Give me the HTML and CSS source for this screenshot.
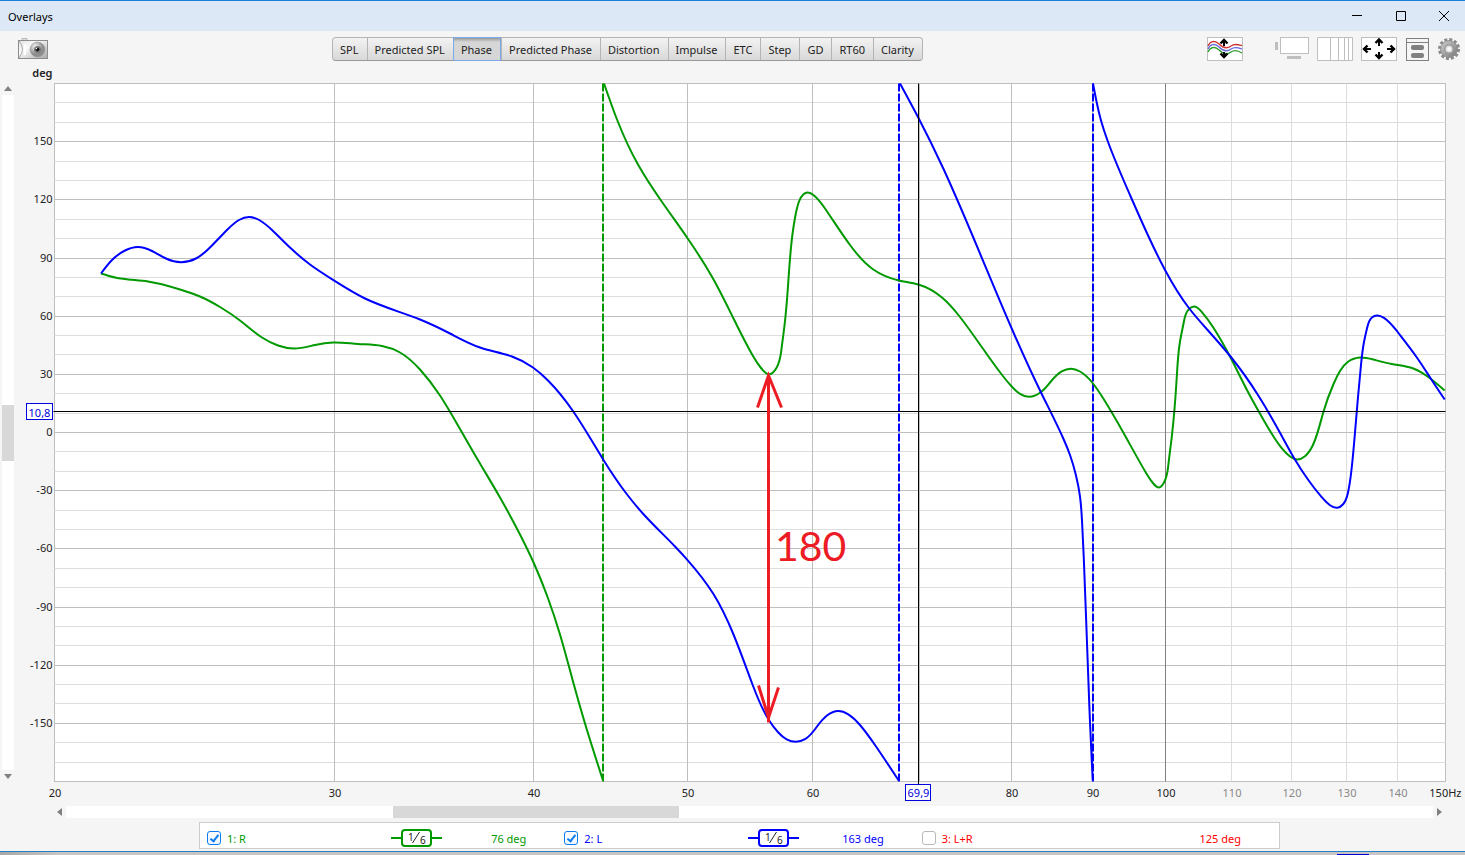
FILE: index.html
```html
<!DOCTYPE html>
<html lang="en">
<head>
  <meta charset="utf-8">
  <title>Overlays</title>
  <link rel="stylesheet" href="styles.css">
</head>
<body>
  <div class="window">
    <header class="titlebar">
      <span class="title">Overlays</span>
      <button class="win-btn" aria-label="Minimize"><svg width="10" height="10"><path d="M0 4.5H10"/></svg></button>
      <button class="win-btn" aria-label="Maximize"><svg width="10" height="10"><path d="M.5 .5H9.5V9.5H.5Z"/></svg></button>
      <button class="win-btn" aria-label="Close"><svg width="10" height="10"><path d="M0 0L10 10M10 0L0 10"/></svg></button>
    </header>

    <div class="toolbar">
      <button class="icon-btn" aria-label="Capture">
        <svg width="30" height="22" viewBox="0 0 30 22">
          <defs>
            <linearGradient id="body" x1="0" x2="1" y2="1"><stop offset="0" stop-color="#e2e2e2"/><stop offset=".35" stop-color="#fafafa"/><stop offset="1" stop-color="#a8a8a8"/></linearGradient>
            <radialGradient id="lens" cx=".35" cy=".3"><stop offset="0" stop-color="#f4f4f4"/><stop offset="1" stop-color="#8d8d8d"/></radialGradient>
          </defs>
          <path d="M4 2V.5H9V2" fill="#ddd" stroke="#bbb"/>
          <rect x=".5" y="2.5" width="29" height="18" fill="url(#body)" stroke="#8c8c8c"/>
          <path d="M1 3Q8 11 1 20" fill="none" stroke="#aaa"/>
          <path d="M7 6V17" stroke="#fff" stroke-width="2"/>
          <circle cx="19.500" cy="11.500" r="7.500" fill="url(#lens)" stroke="#999" stroke-width=".6"/>
          <circle cx="19.500" cy="11.500" r="3.500" fill="#777"/>
          <circle cx="19.500" cy="11.500" r="1.800" fill="#111"/>
          <circle cx="18.500" cy="10.500" r=".7" fill="#fff"/>
        </svg>
      </button>

      <nav class="tabs">
        <button>SPL</button>
        <button>Predicted SPL</button>
        <button class="active">Phase</button>
        <button>Predicted Phase</button>
        <button>Distortion</button>
        <button>Impulse</button>
        <button>ETC</button>
        <button>Step</button>
        <button>GD</button>
        <button>RT60</button>
        <button>Clarity</button>
      </nav>

      <div class="tools">
        <button class="icon-btn separate" aria-label="Separate traces">
          <svg width="36" height="24" viewBox="0 0 36 24">
            <rect x=".5" y=".5" width="35" height="23" fill="#fff" stroke="#bfbfbf"/>
            <g fill="none" stroke-width="1.300">
              <path d="M1 9C3 4 8 3 12 7S20 12 24 9S32 8 35 8.500" stroke="#c33"/>
              <path d="M1 12C3 7 8 6 12 10S20 15 24 12S32 11 35 12" stroke="#66d"/>
              <path d="M1 15C3 10 8 9 12 13S20 18 24 15S32 14 35 16" stroke="#2a9a2a"/>
            </g>
            <path d="M17 9V4M17 15V20" stroke="#000" stroke-width="2"/>
            <path d="M13.500 6.500L17 3L20.500 6.500M13.500 16.500L17 20L20.500 16.500" fill="none" stroke="#000" stroke-width="2.400"/>
          </svg>
        </button>
        <button class="icon-btn" aria-label="Scrollbars">
          <svg width="34" height="24" viewBox="0 0 34 24">
            <path d="M0 5H3V13H0ZM12 19H26V22H12Z" fill="#bfbfbf"/>
            <rect x="5.500" y=".5" width="28" height="16" fill="#fff" stroke="#bfbfbf"/>
          </svg>
        </button>
        <button class="icon-btn" aria-label="Frequency axis">
          <svg width="36" height="24" viewBox="0 0 36 24">
            <path d="M.5 .5H35.500V23.500H.5Z" fill="#fff" stroke="#bfbfbf"/>
            <path d="M13.500 0V24M21.500 0V24M27.500 0V24M31.500 0V24" stroke="#bfbfbf"/>
          </svg>
        </button>
        <button class="icon-btn" aria-label="Graph limits">
          <svg width="36" height="24" viewBox="0 0 36 24">
            <rect x=".5" y=".5" width="35" height="23" fill="#fff" stroke="#bfbfbf"/>
            <path d="M4 12H10M26 12H32M18 4V9M18 15V20" stroke="#000" stroke-width="2"/>
            <path d="M6.500 8.500L3 12L6.500 15.500M29.500 8.500L33 12L29.500 15.500M14.500 6L18 2.500L21.500 6M14.500 17.500L18 21L21.500 17.500" fill="none" stroke="#000" stroke-width="2.400"/>
          </svg>
        </button>
        <button class="icon-btn" aria-label="Controls">
          <svg width="24" height="24" viewBox="0 0 24 24">
            <rect x="1.500" y="1.500" width="22" height="22" fill="#f5f5f5" stroke="#808080"/>
            <path d="M1 5.500H23" stroke="#808080"/>
            <rect x="6" y="8" width="13" height="5" rx="2" fill="#808080"/>
            <rect x="6" y="16" width="13" height="5" rx="2" fill="#808080"/>
          </svg>
        </button>
        <button class="icon-btn" aria-label="Settings">
          <svg width="23" height="24" viewBox="-12 -12 23 24">
            <defs><linearGradient id="gear" x2="1" y2="1"><stop offset="0" stop-color="#cfcfcf"/><stop offset="1" stop-color="#777"/></linearGradient></defs>
            <circle r="9.500" fill="none" stroke="#8a8a8a" stroke-width="3" stroke-dasharray="2.980 1.990"/>
            <circle r="8.500" fill="url(#gear)" stroke="#888" stroke-width=".8"/>
            <circle r="4.800" fill="#999"/>
            <circle r="3.500" fill="#ddd"/>
            <circle r="2" fill="#f8f8f8"/>
          </svg>
        </button>
      </div>
    </div>

    <main class="chart">
      <div class="vscroll">
        <svg width="8" height="5"><path d="M0 5L4 0L8 5Z"/></svg>
        <div class="track"><div class="thumb"></div></div>
        <svg width="8" height="5"><path d="M0 0H8L4 5Z"/></svg>
      </div>
      <svg class="graph" id="graph"></svg>
    </main>

    <div class="hscroll">
      <svg width="5" height="8"><path d="M5 0V8L0 4Z"/></svg>
      <div class="track"><div class="thumb"></div></div>
      <svg width="5" height="8"><path d="M0 0V8L5 4Z"/></svg>
    </div>

    <div class="legend">
      <div class="trace green">
        <input type="checkbox" id="trace1" checked>
        <label for="trace1">1: R</label>
        <svg class="smoothing" width="51" height="20" viewBox="0 0 51 20">
          <path d="M0 10H10M41 10H51"/><rect x="11" y="2" width="29" height="16" rx="3"/>
          <text x="17" y="13">1</text><text x="29" y="16">6</text><path class="slash" d="M21.500 15L28.500 4"/>
        </svg>
        <output class="value">76 deg</output>
      </div>
      <div class="trace blue">
        <input type="checkbox" id="trace2" checked>
        <label for="trace2">2: L</label>
        <svg class="smoothing" width="51" height="20" viewBox="0 0 51 20">
          <path d="M0 10H10M41 10H51"/><rect x="11" y="2" width="29" height="16" rx="3"/>
          <text x="17" y="13">1</text><text x="29" y="16">6</text><path class="slash" d="M21.500 15L28.500 4"/>
        </svg>
        <output class="value">163 deg</output>
      </div>
      <div class="trace red">
        <input type="checkbox" id="trace3">
        <label for="trace3">3: L+R</label>
        <output class="value">125 deg</output>
      </div>
    </div>
    <footer class="edge"><span class="behind"></span></footer>
  </div>
  <script src="script.js"></script>
</body>
</html>
```
FILE: styles.css
```css
body {
  margin: 0;
  font-family: "Noto Sans", "Open Sans", sans-serif;
  font-size: 11px;
  color: #222;
  background: #f5f5f5;
}

button {
  font: inherit;
  color: inherit;
}

svg {
  display: block;
}

.window {
  display: flex;
  flex-direction: column;
  height: 100vh;
  overflow: hidden;
}

/* title bar */
.titlebar {
  display: flex;
  align-items: center;
  box-sizing: border-box;
  height: 31px;
  border-top: 1px solid #1a7fd8;
  background: #dde8f6;
  color: #000;
}

.title {
  flex: 1;
  padding-left: 8px;
}

.win-btn {
  display: flex;
  justify-content: center;
  align-items: center;
  width: 44px;
  height: 30px;
  padding: 0;
  border: 0;
  background: none;
}

.win-btn:last-child {
  width: 42px;
}

.win-btn path {
  fill: none;
  stroke: #000;
}

/* toolbar */
.toolbar {
  display: flex;
  justify-content: space-between;
  align-items: center;
  height: 33px;
  padding: 2px 5px 0 18px;
  box-sizing: border-box;
}

.icon-btn {
  padding: 0;
  border: 0;
  background: none;
}

.tools {
  display: flex;
  align-items: center;
  gap: 8px;
}

.separate {
  margin-right: 24px;
}

.tabs {
  display: flex;
  height: 24px;
  box-sizing: border-box;
  border: 1px solid #b4b4b4;
  border-bottom-color: #999;
  border-radius: 4px;
  background: linear-gradient(#f3f3f3, #d8d8d8);
}

.tabs button {
  padding: 1px 8px 0 7px;
  border: 0;
  border-left: 1px solid #b4b4b4;
  background: none;
}

.tabs button:first-child {
  border-left: 0;
}

.tabs .active {
  margin: -1px 0;
  border: 1px solid #7aa9ec;
  background: linear-gradient(#999, #d6d6d6 4px);
}

/* chart and scroll bars */
.chart {
  display: flex;
  flex: 1;
  min-height: 0;
}

.graph {
  flex: 1;
  min-width: 0;
  height: 100%;
}

.vscroll {
  display: flex;
  flex-direction: column;
  align-items: center;
  justify-content: space-between;
  width: 12px;
  margin: 22px 0 23px 2px;
}

.vscroll .track {
  display: grid;
  grid-template-rows: 310fr 56fr 309fr;
  flex: 1;
  width: 12px;
  margin: 4px 0;
}

.vscroll .thumb {
  grid-row: 2;
}

.hscroll {
  display: flex;
  align-items: center;
  gap: 4px;
  margin: 4px 23px 4px 57px;
}

.hscroll .track {
  display: grid;
  grid-template-columns: 327fr 286fr 754fr;
  flex: 1;
  height: 12px;
}

.hscroll .thumb {
  grid-column: 2;
}

.track {
  background: #fff;
}

.thumb {
  background: #d8d8d8;
}

.vscroll path,
.hscroll path {
  fill: #808080;
}

/* graph drawing */
.plot-bg { fill: #fff; stroke: #bfbfbf; }
.major { stroke: #bfbfbf; }
.minor { stroke: #dedede; }
.decade { stroke: #808080; }
.cursor { stroke: #000; }
.axis { fill: #222; font-size: 11px; }
.axis-minor { fill: #888; }
.unit { font-weight: 600; }
.cursor-box { fill: #fff; stroke: #0000e0; }
.cursor-text { fill: #0000e0; }
.curve { fill: none; stroke-width: 2; }
.wrap { stroke-width: 2; stroke-dasharray: 8 2; }
.green-line { stroke: #090; }
.blue-line { stroke: #00f; }
.arrow { fill: none; stroke: #ed1c24; stroke-width: 3; }
.note { fill: #ed1c24; font: 41px Lato, sans-serif; }

/* legend */
.legend {
  display: grid;
  grid-template-columns: repeat(3, 1fr);
  box-sizing: border-box;
  width: 1081px;
  max-width: 100%;
  height: 27px;
  margin: 0 auto 2px;
  position: relative;
  left: 7px;
  padding-left: 7px;
  border: 1px solid #ccc;
  background: #fff;
}

.trace {
  display: flex;
  align-items: center;
  padding: 5px 38px 0 0;
}

.trace input {
  appearance: none;
  width: 14px;
  height: 14px;
  margin: 0 6px 0 0;
  border: 1px solid #b8b8b8;
  border-radius: 3px;
  background: #fff;
}

.trace input:checked {
  border-color: #0a7cf0;
  background: linear-gradient(#fff, #eef5ff);
}

.trace input:checked::after {
  content: "";
  display: block;
  width: 3px;
  height: 7px;
  margin: 1px 0 0 4px;
  border: solid #0a7cf0;
  border-width: 0 2px 2px 0;
  transform: rotate(38deg);
}

.trace label {
  width: 164px;
}

.value {
  margin-left: auto;
}

.green { color: #090; }
.blue { color: #00f; }
.red { color: #f00; }

.smoothing {
  fill: none;
  stroke: currentColor;
  stroke-width: 2;
}

.smoothing text {
  fill: #222;
  stroke: none;
  font-size: 10px;
}

.smoothing .slash {
  stroke: #222;
  stroke-width: 1;
}

.edge {
  display: flex;
  justify-content: flex-end;
  align-items: flex-end;
  height: 3px;
  padding-right: 96px;
  border-top: 1px solid #1f7fc8;
  background: linear-gradient(90deg, #a8a8a8, #c8c6c4 60px);
}

.behind {
  width: 32px;
  height: 1px;
  background: #00c;
}
```
FILE: script.js
```js
const graph = document.getElementById("graph");

// trace points, x 54.5..1445.5 = 20..150 Hz, y 83..781 = 180..-180 deg
const traces = [
  { color: "green-line", points: "101,273 115,277 148,281 180,289 200,296 220,306.5 240,320 262,337 278,345 294,348 315,344.5 333,342 358,343.5 382,345.5 400,352 420,369 440,395 458,425 480,463 500,497 520,534 534,563 547,595 560,634 573,681 585,723 603,780" },
  { color: "green-line", points: "604,83 617,119 638,164 661.7,201 687.7,238 713,278 733,317 752.7,355 761,367.5 769.5,373.7 776.7,367 781.3,350 784.5,325 787.7,290 792.3,235 795.3,215.7 799,201 803.3,193.9 807.5,192 814,195 825,208 850,244.5 873.3,269 899,280 918.3,284 942,297 960,316.5 980,344 1001.7,374 1011.7,386 1020,393.3 1029,396.3 1040,392.3 1050,382 1061.7,370.9 1071,368.2 1080,371 1093,383 1103.3,398 1123.3,432 1146.7,473.5 1153.3,483 1159,487 1164,482 1168.3,465 1171.7,437 1174.3,411 1176.8,376 1180,341 1183.8,321.5 1188.3,309.3 1194,306 1201.7,311.3 1213.3,327 1231.3,358.5 1246.7,389 1263.3,419 1281.7,447.7 1290,456 1297.3,459 1305,455.7 1312.7,445 1323.3,411.7 1333.3,384 1340,370.5 1348.3,361 1360,357 1373.3,359 1391.7,363.5 1413.3,368 1428.3,376.5 1444.7,390" },
  { color: "blue-line", points: "101,273 112,259.5 125,250 138,246.5 152,250.5 166,258 181,261.7 196,258 212,245 228,228.5 239,219.5 249,216.5 260,220 272,229.500 290,247 310,264 334,280 365,298 420,319 450,333 480,347 512,356 533,367 548,380 573.3,411 603,458.7 626.7,493.5 643.3,513.5 675,546 687.3,559.3 713.3,593.3 733.3,633.5 752.7,684.5 768.7,719.3 778.3,732 786.7,738.9 796,741.3 805,738.7 814,730 826.7,715.3 838.3,710.5 848.3,713.8 860,724.5 875,744.5 898.7,780" },
  { color: "blue-line", points: "900,83 918.5,117.500 943.3,168 980,253 1011.7,328 1041,392 1063.3,438 1070,454.5 1076,475 1080,496 1082,520 1084,563 1086.8,637 1090,721.7 1092.7,780" },
  { color: "blue-line", points: "1093,83 1096.5,101 1101,120 1107.500,140 1130,194.500 1148.3,235.5 1165.3,270 1189.3,308 1206.7,328.5 1231.3,357 1258.3,395 1280,432.3 1294.3,458 1308.3,479.5 1321.7,496.7 1330,504.7 1337.3,507.3 1343.3,503.5 1347.900,492.5 1351.3,471 1355,432 1357.7,400 1360.2,373 1363.3,345.5 1367.2,327 1371.900,317 1377.3,314.9 1384,317.3 1397.3,331 1416.7,356.7 1431.7,379.5 1444.7,399" }
];

// second derivatives of a natural cubic spline through v at parameters t
function splineSlopes(t, v) {
  const n = v.length;
  const m = new Array(n).fill(0);
  const u = new Array(n).fill(0);
  for (let i = 1; i < n - 1; i++) {
    const s = (t[i] - t[i - 1]) / (t[i + 1] - t[i - 1]);
    const p = s * m[i - 1] + 2;
    m[i] = (s - 1) / p;
    const k = (v[i + 1] - v[i]) / (t[i + 1] - t[i]) - (v[i] - v[i - 1]) / (t[i] - t[i - 1]);
    u[i] = (6 * k / (t[i + 1] - t[i - 1]) - s * u[i - 1]) / p;
  }
  m[n - 1] = 0;
  for (let i = n - 2; i >= 0; i--) m[i] = m[i] * m[i + 1] + u[i];
  // first derivatives
  return v.map((_, i) => {
    if (i < n - 1) {
      const h = t[i + 1] - t[i];
      return (v[i + 1] - v[i]) / h - h * (2 * m[i] + m[i + 1]) / 6;
    }
    const h = t[i] - t[i - 1];
    return (v[i] - v[i - 1]) / h + h * (m[i - 1] + 2 * m[i]) / 6;
  });
}

function curvePath(p) {
  const t = [0];
  for (let i = 1; i < p.length; i++) {
    t.push(t[i - 1] + Math.hypot(p[i][0] - p[i - 1][0], p[i][1] - p[i - 1][1]));
  }
  const sx = splineSlopes(t, p.map(q => q[0]));
  const sy = splineSlopes(t, p.map(q => q[1]));
  let d = "M" + p[0];
  for (let i = 0; i < p.length - 1; i++) {
    const h = (t[i + 1] - t[i]) / 3;
    const a = p[i], b = p[i + 1];
    d += `C${a[0] + sx[i] * h},${a[1] + sy[i] * h} ${b[0] - sx[i + 1] * h},${b[1] - sy[i + 1] * h} ${b[0]},${b[1]}`;
  }
  return d;
}

function draw() {
  const left = 40.5;
  const top = 19.5;
  const right = Math.round(graph.clientWidth) - 19.5;
  const bottom = Math.round(graph.clientHeight) - 20.5;
  const width = right - left;
  const height = bottom - top;
  const snap = v => Math.floor(v) + 0.5;
  const hz = f => snap(left + width * Math.log(f / 20) / Math.log(7.5));
  const deg = d => snap(top + height * (180 - d) / 360);
  // trace space to svg space
  const tx = x => left + (x - 54.5) / 1391 * width;
  const ty = y => top + (y - 83) / 698 * height;

  const line = (c, x1, y1, x2, y2) => `<line class="${c}" x1="${x1}" y1="${y1}" x2="${x2}" y2="${y2}"/>`;
  const text = (c, x, y, anchor, s) => `<text class="${c}" x="${x}" y="${y}" text-anchor="${anchor}">${s}</text>`;

  let out = `<rect class="plot-bg" x="${left}" y="${top}" width="${width}" height="${height}"/>`;
  out += text("axis unit", left - 2, top - 6.5, "end", "deg");

  // grid
  [110, 120, 130, 140].forEach(f => out += line("minor", hz(f), top, hz(f), bottom));
  for (let d = -170; d < 180; d += 10) {
    if (d % 30) out += line("minor", left, deg(d), right, deg(d));
  }
  for (let d = -150; d < 180; d += 30) {
    out += line("major", left, deg(d), right, deg(d));
    out += text("axis", left - 2, deg(d) + 3.5, "end", d);
  }
  [30, 40, 50, 60, 70, 80, 90].forEach(f => out += line("major", hz(f), top, hz(f), bottom));
  out += line("decade", hz(100), top, hz(100), bottom);

  const labelY = bottom + 15.5;
  [20, 30, 40, 50, 60, 80, 90, 100].forEach(f => out += text("axis", hz(f) + 0.5, labelY, "middle", f));
  [110, 120, 130, 140].forEach(f => out += text("axis axis-minor", hz(f) + 0.5, labelY, "middle", f));
  out += text("axis", right + 16, labelY, "end", "150Hz");

  // curves
  [[603, "green-line"], [899, "blue-line"], [1093, "blue-line"]].forEach(([x, c]) => {
    const px = Math.round(tx(x));
    out += line("wrap " + c, px, top, px, bottom);
  });
  traces.forEach(t => {
    const p = t.points.split(" ").map(s => s.split(",").map(Number)).map(([x, y]) => [tx(x), ty(y)]);
    out += `<path class="curve ${t.color}" d="${curvePath(p)}"/>`;
  });

  // cursor
  const cx = snap(tx(918.5));
  const cy = snap(ty(411));
  out += line("cursor", left - 1, cy, right, cy);
  out += line("cursor", cx, top, cx, bottom + 4);
  out += `<rect class="cursor-box" x="${left - 28}" y="${cy - 8}" width="26" height="16"/>`;
  out += text("axis cursor-text", left - 15, cy + 5, "middle", "10,8");
  out += `<rect class="cursor-box" x="${cx - 13}" y="${bottom + 3}" width="25" height="16"/>`;
  out += text("axis cursor-text", cx, labelY, "middle", "69,9");

  // phase difference note
  const ax = tx(768.5);
  const a1 = ty(375), a2 = ty(722);
  out += `<path class="arrow" d="M${ax} ${a1}V${a2}M${ax - 11} ${a1 + 32}L${ax} ${a1}L${ax + 13} ${a1 + 32}M${ax - 10} ${a2 - 37}L${ax} ${a2 - 5}L${ax + 10} ${a2 - 35}"/>`;
  out += text("note", tx(775), ty(560), "start", "180");

  graph.innerHTML = out;
}

draw();
window.addEventListener("resize", draw);
```
